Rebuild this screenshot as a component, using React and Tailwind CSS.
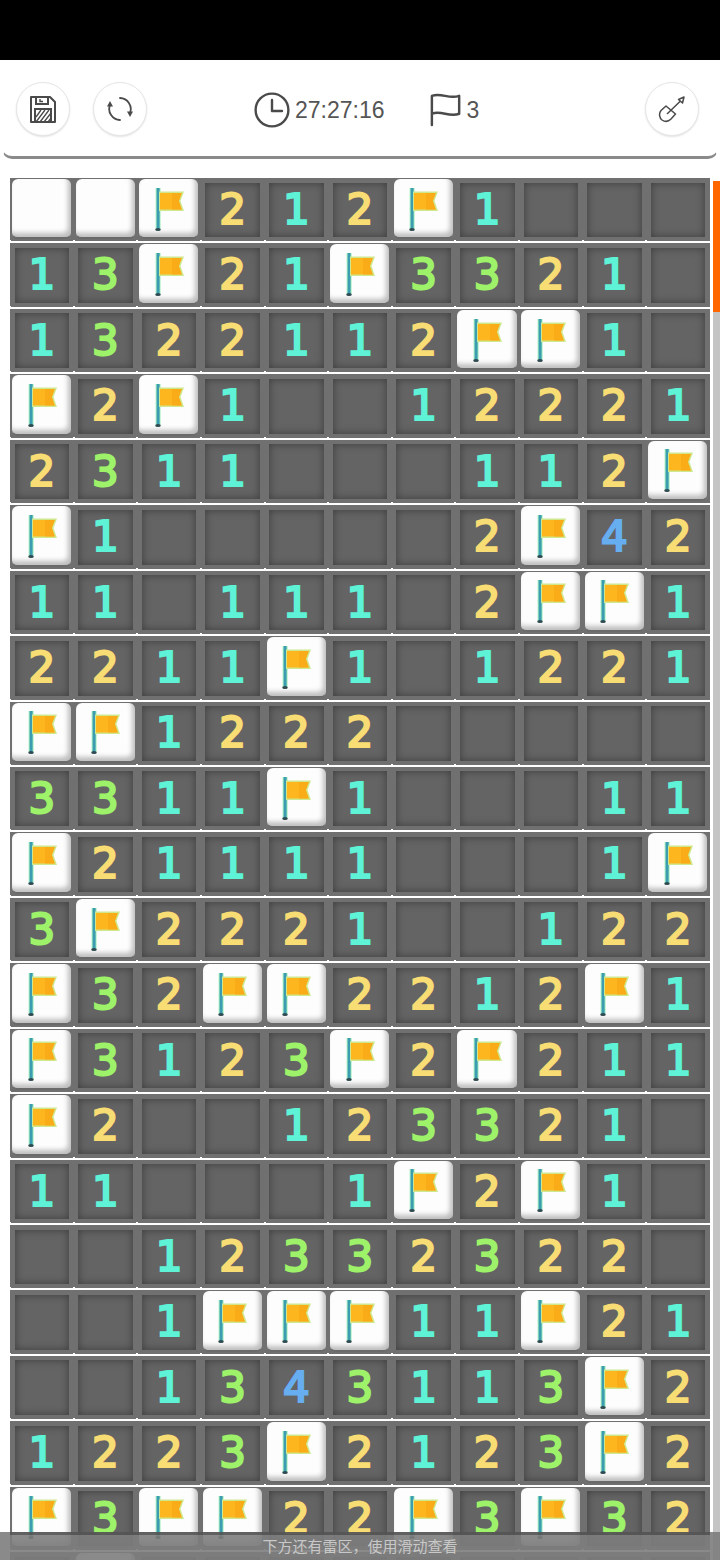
const rows = [
  "WWF212F1...",
  "13F21F3321.",
  "1322112FF1.",
  "F2F1..12221",
  "2311...112F",
  "F1.....2F42",
  "11.111.2FF1",
  "2211F1.1221",
  "FF1222.....",
  "3311F1...11",
  "F21111...1F",
  "3F2221..122",
  "F32FF2212F1",
  "F3123F2F211",
  "F2..12332" + "1.",
  "11...1F2F1.",
  "..12332322.",
  "..1FFF11F21",
  "..1343113F2",
  "1223F2123F2",
  "F3FF22F3F32",
  ".W.........",
];

const colors = {
  1: "text-[#5ef2d6]",
  2: "text-[#f8dc74]",
  3: "text-[#9ef26a]",
  4: "text-[#66aef0]",
};

function FlagIcon() {
  return (
    <svg width="30" height="46" viewBox="0 0 30 46" className="block">
      <rect x="1.6" y="1" width="5" height="41" fill="#a8eec0" />
      <rect x="2.6" y="1" width="3" height="41" fill="#3d9db0" />
      <ellipse cx="4" cy="42.5" rx="2.8" ry="1.6" fill="#2f4a50" />
      <path d="M5 4.5H30L26.5 14L30 24H5Z" fill="#cfe88e" />
      <path d="M6 6H27.8L24.8 14L27.8 22.5H6Z" fill="#fdb61e" />
      <path d="M18 6H27.8L24.8 14L27.8 22.5H18Z" fill="#f9ab18" />
    </svg>
  );
}

function Tick() {
  return <div className="absolute left-[-1px] bottom-[-2px] w-[2px] h-[3px] bg-white" />;
}

function Cell({ v }) {
  if (v === "F" || v === "W") {
    return (
      <div className="relative w-[63.636px] h-full shrink-0 flex pl-[2px] pr-[2.5px] pt-[1px] pb-[2px]">
        <Tick />
        <div className="w-full h-full rounded-[6px] bg-[#fdfdfd] flex items-center justify-center pt-[3px] shadow-[inset_-3px_-4px_5px_rgba(0,0,0,0.25)] border-b-[2px] border-[#6a6a6a]">
          {v === "F" ? <FlagIcon /> : null}
        </div>
      </div>
    );
  }
  return (
    <div className="relative w-[63.636px] h-full shrink-0 flex px-[4.5px] pt-[4.5px] pb-[4px]">
      <Tick />
      <div className="w-full h-full bg-[#646464] flex items-center justify-center shadow-[inset_0_0_8px_rgba(0,0,0,0.4)]">
        {v !== "." ? (
          <span className={`font-['DejaVu_Sans',sans-serif] font-normal text-[42px] leading-none [-webkit-text-stroke:2.2px_currentColor] ${colors[v]}`}>{v}</span>
        ) : null}
      </div>
    </div>
  );
}

function Round({ children }) {
  return (
    <div className="w-[54px] h-[54px] rounded-full bg-white border border-[#e6e6e6] shadow-[0_1px_2px_rgba(0,0,0,0.12)] flex items-center justify-center">
      {children}
    </div>
  );
}

export default function App() {
  return (
    <div className="relative w-[720px] h-[1560px] overflow-hidden bg-white font-['Liberation_Sans',sans-serif]">
      <div className="h-[60px] bg-black" />
      <div className="mx-[2px] h-[99px] rounded-b-[10px] border-b-[3px] border-x-[1px] border-x-transparent border-b-[#8a8a8a] bg-white flex items-center pl-[13px] pr-[12px] pt-[2px]">
        <Round>
          <svg width="28" height="29" viewBox="0 0 28 29" fill="none" stroke="#4a4a4a" strokeWidth="2">
            <path d="M2 2H21L26 7V27H2Z" strokeLinejoin="round" />
            <path d="M7 2V9H19V2" />
            <path d="M11 4V6.5H14" strokeWidth="1.4" />
            <rect x="6" y="14" width="16" height="13" />
            <path d="M7 22L12 15M7 27L16 15M11 27L20 15M15 27L22 18M19 27L22 23" strokeWidth="1.3" />
          </svg>
        </Round>
        <div className="ml-[23px]">
          <Round>
            <svg width="26" height="26" viewBox="0 0 26 26" fill="none" stroke="#4a4a4a" strokeWidth="1.8" strokeLinecap="round">
              <path d="M13 2A11 11 0 0 1 23 17" />
              <path d="M20 15.5H26L23 21Z" fill="#4a4a4a" stroke="none" />
              <path d="M13 24A11 11 0 0 1 3 9" />
              <path d="M0 10.5H6L3 5Z" fill="#4a4a4a" stroke="none" />
            </svg>
          </Round>
        </div>
        <svg className="ml-[107px] mt-[1px]" width="36" height="36" viewBox="0 0 36 36" fill="none" stroke="#4a4a4a" strokeWidth="2.4" strokeLinecap="round" strokeLinejoin="round">
          <circle cx="18" cy="18" r="16.4" />
          <path d="M18 8V19H28" />
        </svg>
        <span className="ml-[5px] mt-[3px] text-[23px] leading-none text-[#555555]">27:27:16</span>
        <svg className="ml-[45px] mt-[1px]" width="32" height="36" viewBox="0 0 34 36" fill="none" stroke="#4a4a4a" strokeWidth="2.6" strokeLinecap="round" strokeLinejoin="round">
          <path d="M2 34V3C12 -1 20 7 31 3V22C20 26 12 18 2 22" />
        </svg>
        <span className="ml-[5px] mt-[3px] text-[23px] leading-none text-[#555555]">3</span>
        <div className="ml-auto mr-[6px]">
          <Round>
            <svg width="28" height="28" viewBox="0 0 28 28" fill="none" stroke="#4a4a4a" strokeWidth="1.5" strokeLinejoin="round">
              <path d="M8 11L3 15.5C0.5 18.5 1.5 23 4 25C7 27 10.5 26.5 13 24L17.5 19Z" />
              <path d="M9 19L22.5 6" />
              <path d="M20.5 4.5L26 2L24.5 8Z" />
            </svg>
          </Round>
        </div>
      </div>
      <div className="flex mt-[19px]">
        <div className="w-[10px] shrink-0" />
        <div className="w-[700px] shrink-0">
          {rows.map((r, i) => (
            <div key={i} className="flex h-[65.45px] border-b-[2px] border-white bg-[#707070]">
              {r.split("").map((v, j) => (
                <Cell key={j} v={v} />
              ))}
            </div>
          ))}
        </div>
      </div>
      <div className="absolute right-0 top-[181px] bottom-0 w-[7px] bg-[#c4c4c4]">
        <div className="h-[131px] bg-[#ff6600]" />
      </div>
      <div className="absolute left-0 right-0 bottom-0 h-[28px] bg-[rgba(125,125,125,0.9)] flex items-center justify-center text-[15px] text-[#c8c8c8] font-['Noto_Sans_CJK_SC',sans-serif]">
        <div className="absolute left-[10px] top-0 w-[700px] h-[3px] bg-[rgba(0,0,0,0.3)]" />
        下方还有雷区，使用滑动查看
      </div>
    </div>
  );
}
